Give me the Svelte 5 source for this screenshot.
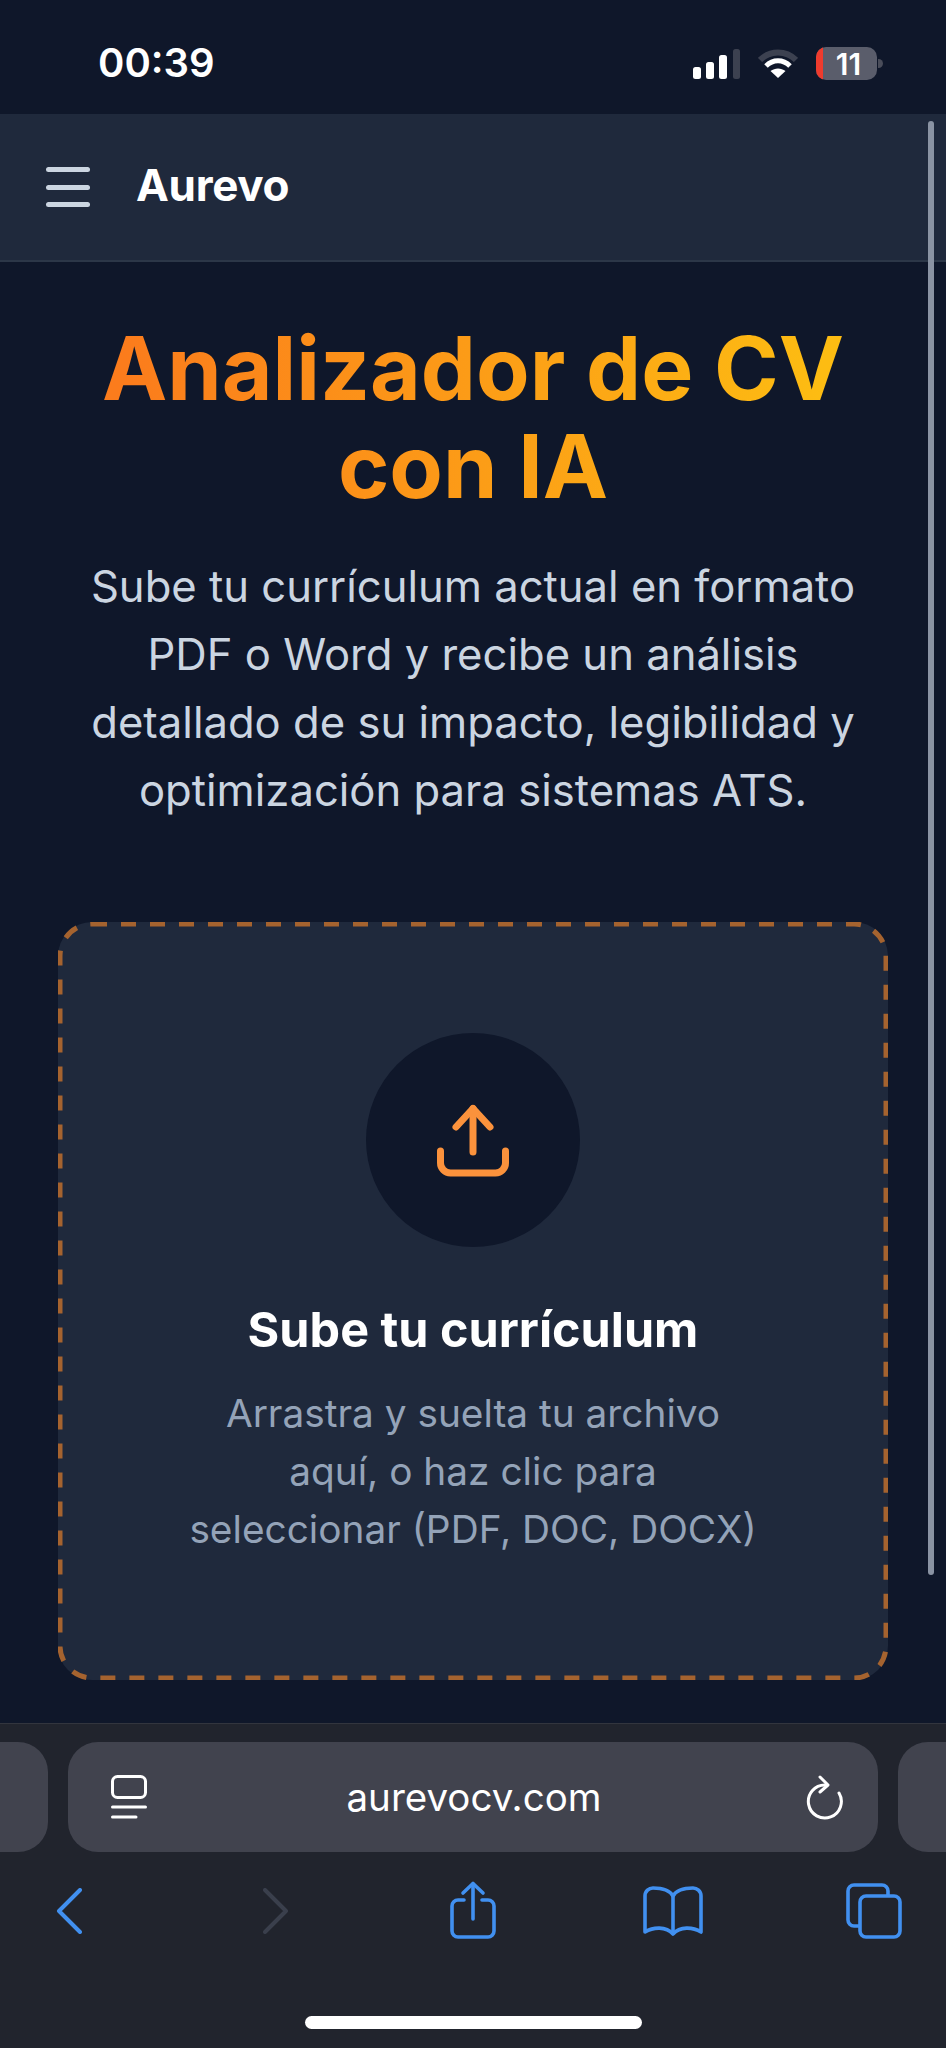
<script>
	const fileTypes = 'PDF, DOC, DOCX';
</script>

<div class="page">
	<div class="status">
		<span class="time">00:39</span>
		<div class="status-icons">
			<svg class="signal" width="47" height="30" viewBox="0 0 47 30">
				<rect x="0" y="18" width="8" height="12" rx="2.5" fill="#fff" />
				<rect x="13" y="13" width="8" height="17" rx="2.5" fill="#fff" />
				<rect x="26" y="6" width="8" height="24" rx="2.5" fill="#fff" />
				<rect x="40" y="0" width="7" height="30" rx="2.5" fill="#3c4150" />
			</svg>
			<svg class="wifi" width="40" height="30" viewBox="0 0 40 30">
				<path d="M2 11 C12 1 28 1 38 11" fill="none" stroke="#3c4150" stroke-width="6" />
				<path d="M8 17 C15 10 25 10 32 17" fill="none" stroke="#fff" stroke-width="5" />
				<path d="M20 29 L12.5 22 C17 18.5 23 18.5 27.5 22 Z" fill="#fff" />
			</svg>
			<div class="battery">
				<div class="cell"><span class="low"></span><b>11</b></div>
				<span class="nub"></span>
			</div>
		</div>
	</div>

	<header class="topbar">
		<button class="menu" aria-label="Menú">
			<span></span><span></span><span></span>
		</button>
		<span class="brand">Aurevo</span>
	</header>

	<main class="content">
		<h1>Analizador de CV<br />con IA</h1>
		<p class="lead">
			Sube tu currículum actual en formato PDF o Word y recibe un análisis detallado de su impacto,
			legibilidad y optimización para sistemas ATS.
		</p>

		<section class="dropzone">
			<svg class="dashes" aria-hidden="true"><rect class="dash" x="2" y="2" rx="32" /></svg>
			<div class="circle">
				<svg width="100" height="100" viewBox="0 0 100 100" fill="none" stroke="#fb923c" stroke-width="7" stroke-linecap="round" stroke-linejoin="round">
					<path d="M17.5 61 v12 a10 10 0 0 0 10 10 h45 a10 10 0 0 0 10 -10 v-12" />
					<path d="M50 18.5 V62" />
					<path d="M33 37 L50 18.5 L67 37" />
				</svg>
			</div>
			<h2>Sube tu currículum</h2>
			<p class="hint">Arrastra y suelta tu archivo aquí, o haz clic para seleccionar ({fileTypes})</p>
		</section>
	</main>

	<div class="scrollbar"></div>

	<footer class="browser">
		<div class="tabs">
			<div class="side left"></div>
			<div class="address">
				<svg class="reader" width="36" height="44" viewBox="0 0 36 44" fill="none" stroke="#fff" stroke-width="3" stroke-linecap="round">
					<rect x="1.5" y="1.5" width="33" height="21" rx="5" />
					<path d="M1.5 32 H34.5" />
					<path d="M1.5 42 H25" />
				</svg>
				<span class="url">aurevocv.com</span>
				<svg class="reload" width="38" height="46" viewBox="0 0 38 46" fill="none" stroke="#fff" stroke-width="3" stroke-linecap="round" stroke-linejoin="round">
					<path d="M20 11 A 16.5 16.5 0 1 0 34 19" />
					<path d="M15 3 L23 11 L15 18" />
				</svg>
			</div>
			<div class="side right"></div>
		</div>

		<nav class="tools">
			<svg class="chev" width="26" height="46" viewBox="0 0 26 46" fill="none" stroke="#4190f0" stroke-width="4" stroke-linecap="round" stroke-linejoin="round">
				<path d="M24 2 L3 23 L24 44" />
			</svg>
			<svg class="chev" width="26" height="46" viewBox="0 0 26 46" fill="none" stroke="#3a3f4c" stroke-width="4" stroke-linecap="round" stroke-linejoin="round">
				<path d="M2 2 L23 23 L2 44" />
			</svg>
			<svg width="48" height="60" viewBox="0 0 48 60" fill="none" stroke="#4190f0" stroke-width="3.6" stroke-linecap="round" stroke-linejoin="round">
				<path d="M15 19 H9 a6 6 0 0 0 -6 6 V50 a6 6 0 0 0 6 6 H39 a6 6 0 0 0 6 -6 V25 a6 6 0 0 0 -6 -6 H33" />
				<path d="M24 38 V3" />
				<path d="M14 12 L24 2.5 L34 12" />
			</svg>
			<svg width="60" height="50" viewBox="0 0 60 50" fill="none" stroke="#4190f0" stroke-width="3.6" stroke-linecap="round" stroke-linejoin="round">
				<path d="M30 10 C26 3 18 2 10 2 C6 2 2 5 2 10 V46 C10 41 23 40 30 48 C37 40 50 41 58 46 V10 C58 5 54 2 50 2 C42 2 34 3 30 10 Z" />
				<path d="M30 10 V47" />
			</svg>
			<svg width="56" height="56" viewBox="0 0 56 56" fill="none" stroke="#4190f0" stroke-width="3.6" stroke-linejoin="round">
				<path d="M14 43 H8 a6 6 0 0 1 -6 -6 V8 a6 6 0 0 1 6 -6 H36 a6 6 0 0 1 6 6 V14" />
				<rect x="14" y="13" width="40" height="41" rx="6" />
			</svg>
		</nav>

		<div class="home"></div>
	</footer>
</div>

<style>
	:global(body) {
		background: #0f172a;
	}

	.page {
		position: relative;
		display: flex;
		flex-direction: column;
		height: 2048px;
		overflow: hidden;
		background: #0f172a;
		font-family: Inter, 'Liberation Sans', sans-serif;
	}

	.status {
		display: flex;
		align-items: center;
		justify-content: space-between;
		height: 114px;
		padding: 0 63px 0 98px;
		box-sizing: border-box;
	}

	.time {
		color: #fff;
		font-size: 40px;
		font-weight: 600;
		margin-top: 10px;
	}

	.status-icons {
		display: flex;
		align-items: center;
		gap: 18px;
		margin-top: 13px;
	}

	.battery {
		display: flex;
		align-items: center;
		gap: 1px;
	}

	.cell {
		position: relative;
		display: flex;
		align-items: center;
		justify-content: center;
		width: 61px;
		height: 33px;
		border-radius: 10px;
		background: #5a5d6b;
		overflow: hidden;
	}

	.cell b {
		color: #fff;
		font-size: 30px;
		font-weight: 600;
		margin-left: 4px;
	}

	.low {
		position: absolute;
		left: 0;
		top: 0;
		bottom: 0;
		width: 7px;
		background: #ef3b2d;
	}

	.nub {
		width: 5px;
		height: 9px;
		border-radius: 0 5px 5px 0;
		background: #4a4d5a;
	}

	.topbar {
		display: flex;
		align-items: center;
		gap: 46px;
		height: 148px;
		padding-left: 46px;
		box-sizing: border-box;
		background: #1f293c;
		border-bottom: 2px solid #2c3748;
	}

	.menu {
		display: flex;
		flex-direction: column;
		justify-content: space-between;
		width: 44px;
		height: 40px;
		padding: 0;
		border: none;
		background: none;
	}

	.menu span {
		height: 5px;
		border-radius: 3px;
		background: #cbd5e1;
	}

	.brand {
		color: #fff;
		font-size: 44px;
		font-weight: 700;
		margin-top: -4px;
		letter-spacing: -0.3px;
	}

	.content {
		flex: 1;
		padding: 57px 58px 0;
		text-align: center;
	}

	h1 {
		margin: 0;
		font-size: 87.5px;
		line-height: 98px;
		font-weight: 700;
		background: linear-gradient(90deg, #fb7c1c 8%, #fdbc12 92%);
		-webkit-background-clip: text;
		background-clip: text;
		color: transparent;
	}

	.lead {
		margin: 38px 0 0;
		color: #cbd5e1;
		font-size: 43.6px;
		line-height: 68px;
	}

	.dropzone {
		position: relative;
		display: flex;
		flex-direction: column;
		align-items: center;
		height: 758px;
		margin-top: 97px;
		padding-top: 111px;
		box-sizing: border-box;
		border-radius: 34px;
		background: #1f293c;
	}

	.dashes {
		position: absolute;
		inset: 0;
		width: 100%;
		height: 100%;
	}

	.dash {
		width: calc(100% - 4px);
		height: calc(100% - 4px);
		fill: none;
		stroke: #a5632f;
		stroke-width: 5;
		stroke-dasharray: 15 14;
	}

	.circle {
		display: flex;
		align-items: center;
		justify-content: center;
		width: 214px;
		height: 214px;
		border-radius: 50%;
		background: #0f172a;
	}

	h2 {
		margin: 54px 0 0;
		color: #fff;
		font-size: 48.5px;
		line-height: 58px;
		font-weight: 700;
	}

	.hint {
		max-width: 582px;
		margin: 25px 0 0;
		color: #94a3b8;
		font-size: 38.8px;
		line-height: 58px;
	}

	.scrollbar {
		position: absolute;
		top: 121px;
		right: 12px;
		width: 6px;
		height: 1454px;
		border-radius: 3px;
		background: #8a93a3;
	}

	.browser {
		height: 325px;
		box-sizing: border-box;
		background: #21242d;
		border-top: 1px solid #32353e;
		padding-top: 18px;
	}

	.tabs {
		display: grid;
		grid-template-columns: 48px 810px 48px;
		gap: 20px;
		height: 110px;
	}

	.side {
		background: #41434e;
	}

	.side.left {
		border-radius: 0 30px 30px 0;
	}

	.side.right {
		border-radius: 30px 0 0 30px;
	}

	.address {
		display: flex;
		align-items: center;
		justify-content: space-between;
		padding: 0 35px 0 43px;
		border-radius: 30px;
		background: #41434e;
	}

	.url {
		color: #fff;
		font-size: 38.5px;
		margin-left: -4px;
	}

	.tools {
		display: grid;
		grid-template-columns: 138px 276px 118px 282px 119px;
		justify-items: center;
		align-items: center;
		height: 118px;
	}

	.home {
		width: 337px;
		height: 13px;
		margin: 46px auto 0;
		border-radius: 7px;
		background: #fff;
	}
</style>
